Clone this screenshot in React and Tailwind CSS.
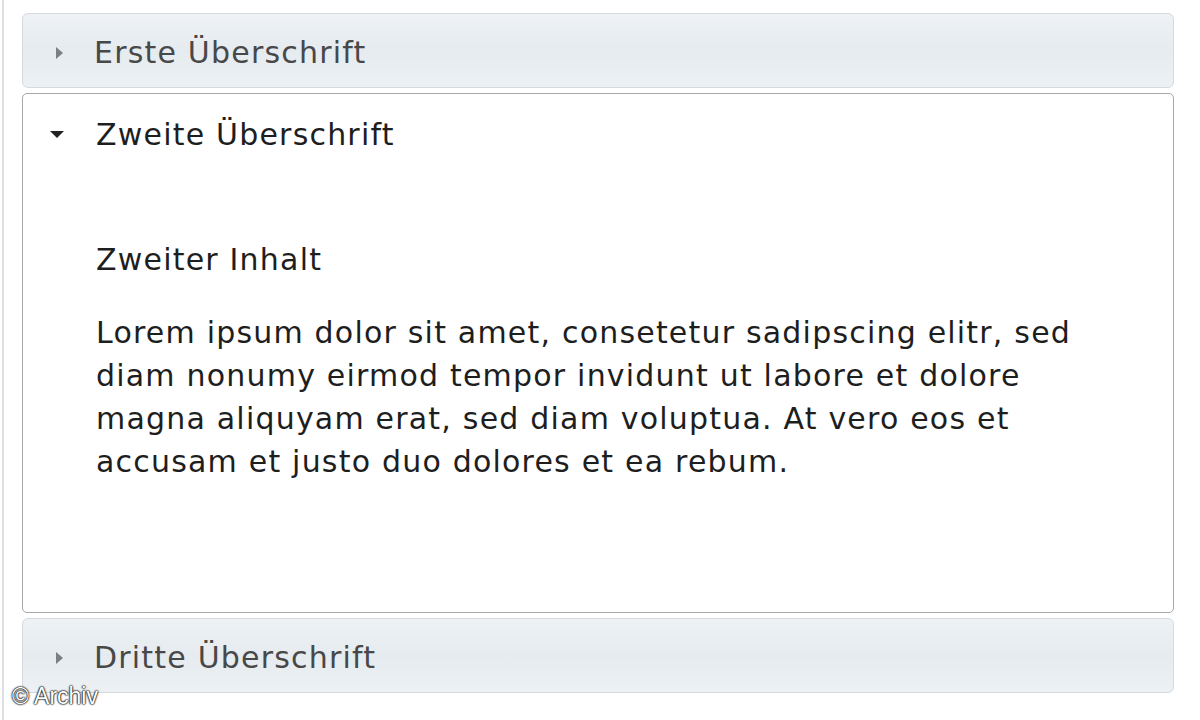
export default function App() {
  const font = { fontFamily: '"DejaVu Sans", Verdana, sans-serif' }

  return (
    <div className="relative w-[1200px] h-[720px] bg-white overflow-hidden" style={font}>
      <div className="absolute left-[2px] top-0 h-full w-[2px] bg-[#dcdfe2]" />
      <div className="flex flex-col gap-[5px] pl-[22px] pt-[13px] w-[1174px]">
        <Header title="Erste Überschrift" />

        <div className="h-[520px] rounded-[5px] border border-[#a4a9ae] bg-white">
          <div className="flex items-center h-[80px] pl-[27px] gap-[32px] text-[#1e1e1e] text-[30px] tracking-[1.2px]">
            <span className="block w-0 h-0 border-l-[7px] border-r-[7px] border-t-[7px] border-l-transparent border-r-transparent border-t-[#222]" />
            <span>Zweite Überschrift</span>
          </div>
          <div className="pl-[73px] pr-[40px] pt-[64px] text-[30px] tracking-[1.2px] text-[#1e1e1e] leading-[43px]">
            <p>Zweiter Inhalt</p>
            <p className="mt-[30px]">
              Lorem ipsum dolor sit amet, consetetur sadipscing elitr, sed
              <br />diam nonumy eirmod tempor invidunt ut labore et dolore
              <br />magna aliquyam erat, sed diam voluptua. At vero eos et
              <br />accusam et justo duo dolores et ea rebum.
            </p>
          </div>
        </div>

        <Header title="Dritte Überschrift" />
      </div>

      <div className="absolute left-[12px] top-[685px] text-white text-[23px] leading-none [text-shadow:0_0_2px_#000,0_0_2px_#000,0_0_1px_#000]" style={{ fontFamily: '"Liberation Sans", Arial, sans-serif' }}>
        © Archiv
      </div>
    </div>
  )
}

function Header({ title }) {
  return (
    <div className="h-[75px] rounded-[6px] border border-[#d4dadf] bg-gradient-to-b from-[#eef2f5] via-[#e6ebef] to-[#edf1f4] flex items-center pt-[4px] pl-[33px] gap-[31px] text-[#484848] text-[30px] tracking-[1.2px]">
      <span className="block w-0 h-0 border-t-[6px] border-b-[6px] border-l-[7px] border-t-transparent border-b-transparent border-l-[#7b7f84]" />
      <span>{title}</span>
    </div>
  )
}
